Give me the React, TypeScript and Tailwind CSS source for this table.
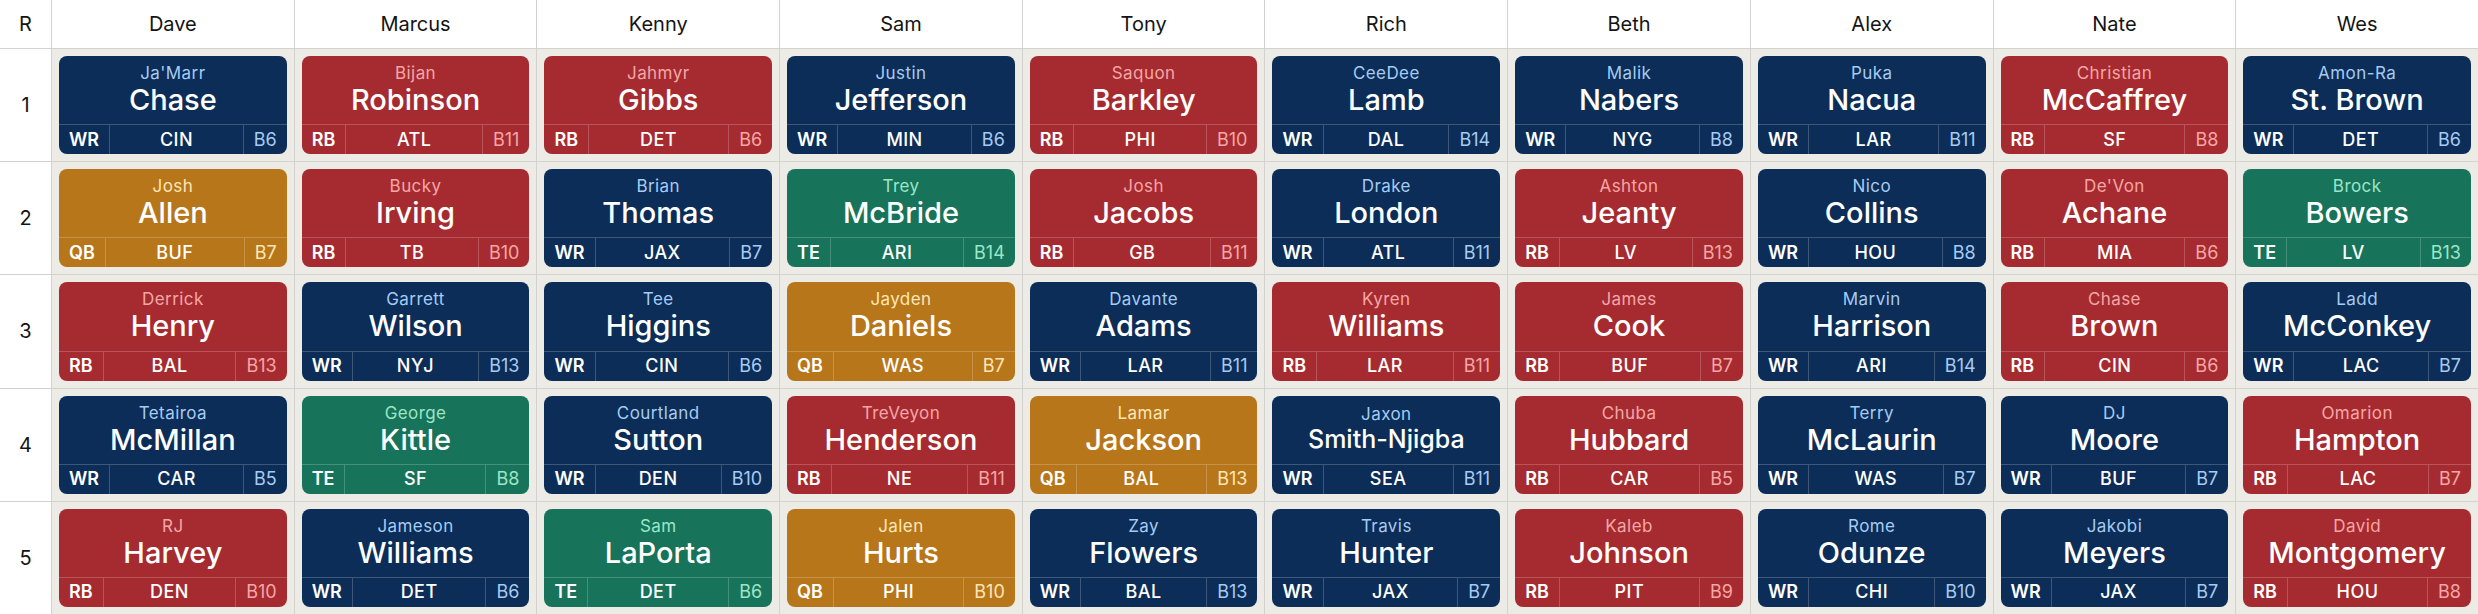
import React from "react";

type Pos = "QB" | "RB" | "WR" | "TE";

type Pick = {
  first: string;
  last: string;
  pos: Pos;
  team: string;
  bye: number;
};

const teams = ["Dave", "Marcus", "Kenny", "Sam", "Tony", "Rich", "Beth", "Alex", "Nate", "Wes"];

const p = (first: string, last: string, pos: Pos, team: string, bye: number): Pick => ({
  first,
  last,
  pos,
  team,
  bye,
});

const board: Pick[][] = [
  [
    p("Ja'Marr", "Chase", "WR", "CIN", 6),
    p("Bijan", "Robinson", "RB", "ATL", 11),
    p("Jahmyr", "Gibbs", "RB", "DET", 6),
    p("Justin", "Jefferson", "WR", "MIN", 6),
    p("Saquon", "Barkley", "RB", "PHI", 10),
    p("CeeDee", "Lamb", "WR", "DAL", 14),
    p("Malik", "Nabers", "WR", "NYG", 8),
    p("Puka", "Nacua", "WR", "LAR", 11),
    p("Christian", "McCaffrey", "RB", "SF", 8),
    p("Amon-Ra", "St. Brown", "WR", "DET", 6),
  ],
  [
    p("Josh", "Allen", "QB", "BUF", 7),
    p("Bucky", "Irving", "RB", "TB", 10),
    p("Brian", "Thomas", "WR", "JAX", 7),
    p("Trey", "McBride", "TE", "ARI", 14),
    p("Josh", "Jacobs", "RB", "GB", 11),
    p("Drake", "London", "WR", "ATL", 11),
    p("Ashton", "Jeanty", "RB", "LV", 13),
    p("Nico", "Collins", "WR", "HOU", 8),
    p("De'Von", "Achane", "RB", "MIA", 6),
    p("Brock", "Bowers", "TE", "LV", 13),
  ],
  [
    p("Derrick", "Henry", "RB", "BAL", 13),
    p("Garrett", "Wilson", "WR", "NYJ", 13),
    p("Tee", "Higgins", "WR", "CIN", 6),
    p("Jayden", "Daniels", "QB", "WAS", 7),
    p("Davante", "Adams", "WR", "LAR", 11),
    p("Kyren", "Williams", "RB", "LAR", 11),
    p("James", "Cook", "RB", "BUF", 7),
    p("Marvin", "Harrison", "WR", "ARI", 14),
    p("Chase", "Brown", "RB", "CIN", 6),
    p("Ladd", "McConkey", "WR", "LAC", 7),
  ],
  [
    p("Tetairoa", "McMillan", "WR", "CAR", 5),
    p("George", "Kittle", "TE", "SF", 8),
    p("Courtland", "Sutton", "WR", "DEN", 10),
    p("TreVeyon", "Henderson", "RB", "NE", 11),
    p("Lamar", "Jackson", "QB", "BAL", 13),
    p("Jaxon", "Smith-Njigba", "WR", "SEA", 11),
    p("Chuba", "Hubbard", "RB", "CAR", 5),
    p("Terry", "McLaurin", "WR", "WAS", 7),
    p("DJ", "Moore", "WR", "BUF", 7),
    p("Omarion", "Hampton", "RB", "LAC", 7),
  ],
  [
    p("RJ", "Harvey", "RB", "DEN", 10),
    p("Jameson", "Williams", "WR", "DET", 6),
    p("Sam", "LaPorta", "TE", "DET", 6),
    p("Jalen", "Hurts", "QB", "PHI", 10),
    p("Zay", "Flowers", "WR", "BAL", 13),
    p("Travis", "Hunter", "WR", "JAX", 7),
    p("Kaleb", "Johnson", "RB", "PIT", 9),
    p("Rome", "Odunze", "WR", "CHI", 10),
    p("Jakobi", "Meyers", "WR", "JAX", 7),
    p("David", "Montgomery", "RB", "HOU", 8),
  ],
];

const styles: Record<Pos, { card: string; accent: string }> = {
  WR: { card: "bg-[#0c2d57]", accent: "text-[#a6cbf3]" },
  RB: { card: "bg-[#a62b30]", accent: "text-[#f5a6a6]" },
  QB: { card: "bg-[#b8761b]", accent: "text-[#fde6b6]" },
  TE: { card: "bg-[#17735a]", accent: "text-[#9be6c6]" },
};

function PickCard({ pick }: { pick: Pick }) {
  const s = styles[pick.pos];
  const long = pick.last.length > 11;

  return (
    <div className={`flex h-full flex-col overflow-hidden rounded-lg text-white ${s.card}`}>
      <div className="flex flex-1 flex-col items-center justify-center pb-px">
        <div className={`text-[17px] leading-[20px] tracking-wide ${s.accent}`}>{pick.first}</div>
        <div
          className={`font-medium ${
            long ? "text-[25px] leading-[30px]" : "text-[29px] leading-[33px]"
          }`}
        >
          {pick.last}
        </div>
      </div>
      <div className="flex h-[30px] border-t border-white/20 text-[18px] leading-none">
        <div className="flex items-center border-r border-white/20 px-[10px] font-semibold">
          {pick.pos}
        </div>
        <div className="flex flex-1 items-center justify-center font-medium tracking-wide">
          {pick.team}
        </div>
        <div className={`flex items-center border-l border-white/20 px-[10px] ${s.accent}`}>
          B{pick.bye}
        </div>
      </div>
    </div>
  );
}

export default function App() {
  return (
    <div
      className="grid h-[614px] w-[2478px] grid-cols-[51px_repeat(10,1fr)] grid-rows-[48px_repeat(5,1fr)] gap-px bg-[#d3d2ce] text-[#141414]"
      style={{ fontFamily: "Inter, 'Noto Sans', sans-serif" }}
    >
      <div className="flex items-center justify-center bg-white text-[20px]">R</div>
      {teams.map((t) => (
        <div key={t} className="flex items-center justify-center bg-white text-[20px]">
          {t}
        </div>
      ))}
      {board.map((row, i) => (
        <React.Fragment key={i}>
          <div className="flex items-center justify-center bg-white text-[20px]">{i + 1}</div>
          {row.map((pick) => (
            <div key={pick.last + pick.first} className="bg-[#ecebe6] p-[7px]">
              <PickCard pick={pick} />
            </div>
          ))}
        </React.Fragment>
      ))}
    </div>
  );
}
